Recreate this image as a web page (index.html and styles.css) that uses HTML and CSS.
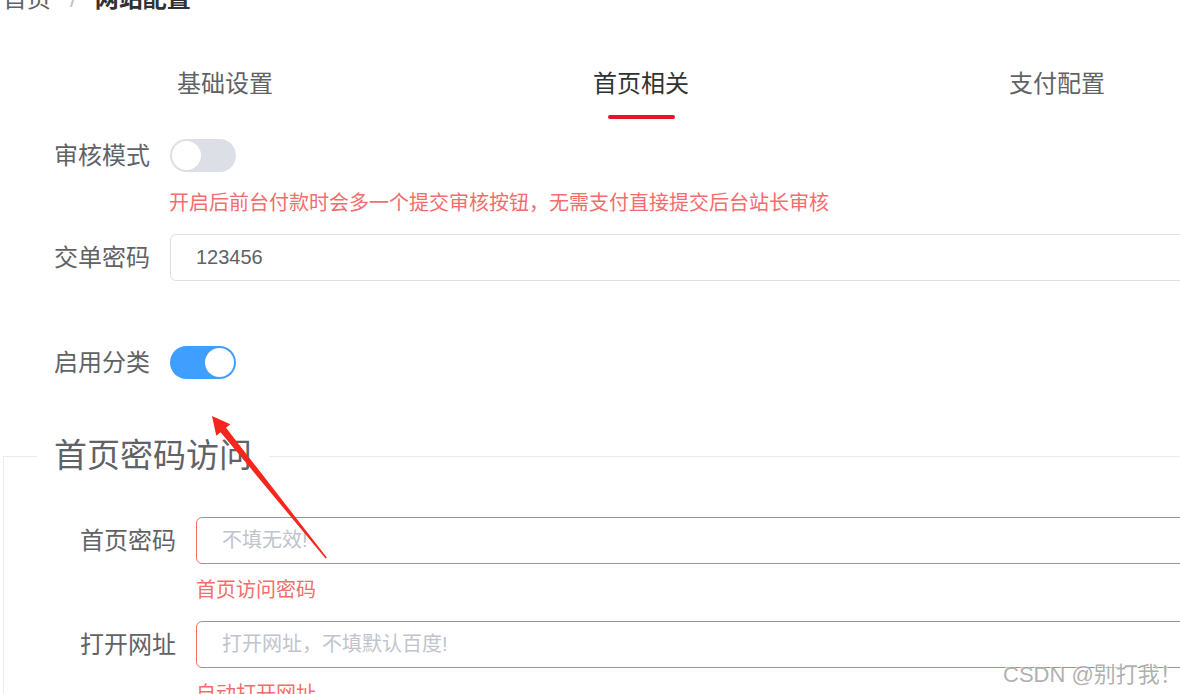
FILE: index.html
```html
<!DOCTYPE html>
<html lang="zh-CN">
<head>
<meta charset="utf-8">
<title>网站配置</title>
<link rel="stylesheet" href="styles.css">
</head>
<body>
<div class="page">
  <div class="breadcrumb">
    <span class="crumb">首页</span>
    <span class="sep">/</span>
    <span class="crumb current">网站配置</span>
  </div>

  <div class="tabs">
    <div class="tab">基础设置</div>
    <div class="tab active">首页相关<span class="ink"></span></div>
    <div class="tab">支付配置</div>
  </div>

  <div class="form">
    <div class="row row-audit">
      <label class="label">审核模式</label>
      <div class="control"><span class="switch"><span class="knob"></span></span></div>
    </div>
    <div class="hint hint-audit">开启后前台付款时会多一个提交审核按钮，无需支付直接提交后台站长审核</div>

    <div class="row row-pwd">
      <label class="label">交单密码</label>
      <div class="control"><div class="input">123456</div></div>
    </div>

    <div class="row row-cat">
      <label class="label">启用分类</label>
      <div class="control"><span class="switch on"><span class="knob"></span></span></div>
    </div>

    <fieldset class="group">
      <legend>首页密码访问</legend>
      <div class="row row-home">
        <label class="label wide">首页密码</label>
        <div class="control"><div class="input error placeholder">不填无效!</div></div>
      </div>
      <div class="hint hint-in">首页访问密码</div>
      <div class="row row-url">
        <label class="label wide">打开网址</label>
        <div class="control"><div class="input error placeholder">打开网址，不填默认百度!</div></div>
      </div>
      <div class="hint hint-in">自动打开网址</div>
    </fieldset>
  </div>
</div>

<svg class="arrow" width="1180" height="694" viewBox="0 0 1180 694">
  <polygon points="212,416 230.3,424.3 226,427.8 326.8,557.5 325.6,558.6 220.6,432.2 216.3,435.7" fill="#f5261b"/>
</svg>

<div class="watermark">CSDN @别打我！</div>
</body>
</html>
```

FILE: styles.css
```css
html, body {
  margin: 0;
  padding: 0;
  background: #ffffff;
  overflow: hidden;
  width: 1180px;
  height: 694px;
}

body {
  position: relative;
  font-family: "Liberation Sans", "Noto Sans CJK SC", sans-serif;
  color: #606266;
}

.page {
  width: 1270px;
}

.breadcrumb {
  margin-top: -16px;
  height: 30px;
  line-height: 30px;
  font-size: 24px;
  padding-left: 3px;
  display: flex;
}

.crumb {
  color: #606266;
}

.crumb.current {
  color: #303133;
  font-weight: bold;
}

.sep {
  color: #c0c4cc;
  margin: 0 18px 0 19px;
}

.tabs {
  display: flex;
  padding-left: 17px;
  padding-top: 55px;
}

.tab {
  width: 416px;
  display: flex;
  flex-direction: column;
  align-items: center;
  font-size: 24px;
  line-height: 30px;
  color: #606266;
  height: 50px;
}

.tab.active {
  color: #303133;
}

.ink {
  display: block;
  width: 67px;
  height: 4px;
  border-radius: 2px;
  background: #e8132b;
  margin-top: 16px;
}

.form {
  display: flex;
  flex-direction: column;
}

.row {
  display: flex;
  align-items: center;
}

.label {
  width: 150px;
  padding-right: 20px;
  text-align: right;
  font-size: 24px;
  line-height: 33px;
  color: #606266;
  flex: none;
}

.label.wide {
  width: 139px;
}

.control {
  flex: 1;
  display: flex;
  align-items: center;
}

.row-audit {
  margin-top: 20px;
  height: 33px;
}

.switch {
  position: relative;
  display: block;
  width: 66px;
  height: 33px;
  border-radius: 17px;
  background: #dcdfe6;
  box-sizing: border-box;
}

.switch .knob {
  position: absolute;
  top: 2px;
  left: 2px;
  width: 29px;
  height: 29px;
  border-radius: 50%;
  background: #ffffff;
}

.switch.on {
  background: #409eff;
}

.switch.on .knob {
  left: 35px;
}

.hint {
  font-size: 20px;
  line-height: 24px;
  color: #f56c6c;
  padding-left: 169px;
}

.hint-audit {
  margin-top: 19px;
}

.row-pwd {
  margin-top: 19px;
}

.input {
  flex: 1;
  height: 47px;
  box-sizing: border-box;
  border: 1px solid #dcdfe6;
  border-radius: 6px;
  padding-left: 25px;
  font-size: 20px;
  line-height: 45px;
  color: #606266;
}

.input.error {
  border-color: #f56c6c;
}

.input.placeholder {
  color: #c0c4cc;
}

.row-cat {
  margin-top: 65px;
  height: 33px;
}

.group {
  margin: 57px 0 0 3px;
  padding: 0 0 0 33px;
  border: 1px solid #ebebeb;
  min-width: 0;
}

.group legend {
  padding: 0 17px 0 17px;
  font-size: 33px;
  line-height: 40px;
  color: #606266;
}

.row-home {
  margin-top: 41px;
}

.hint-in {
  padding-left: 159px;
  margin-top: 14px;
}

.row-url {
  margin-top: 19px;
}

.arrow {
  position: absolute;
  top: 0;
  left: 0;
  pointer-events: none;
}

.watermark {
  position: absolute;
  left: 1003px;
  top: 660px;
  font-size: 22px;
  line-height: 30px;
  color: rgba(150, 150, 150, 0.75);
  text-shadow: 1px 1px 0 rgba(255, 255, 255, 0.9), -1px -1px 0 rgba(255, 255, 255, 0.6);
  white-space: nowrap;
}
```
